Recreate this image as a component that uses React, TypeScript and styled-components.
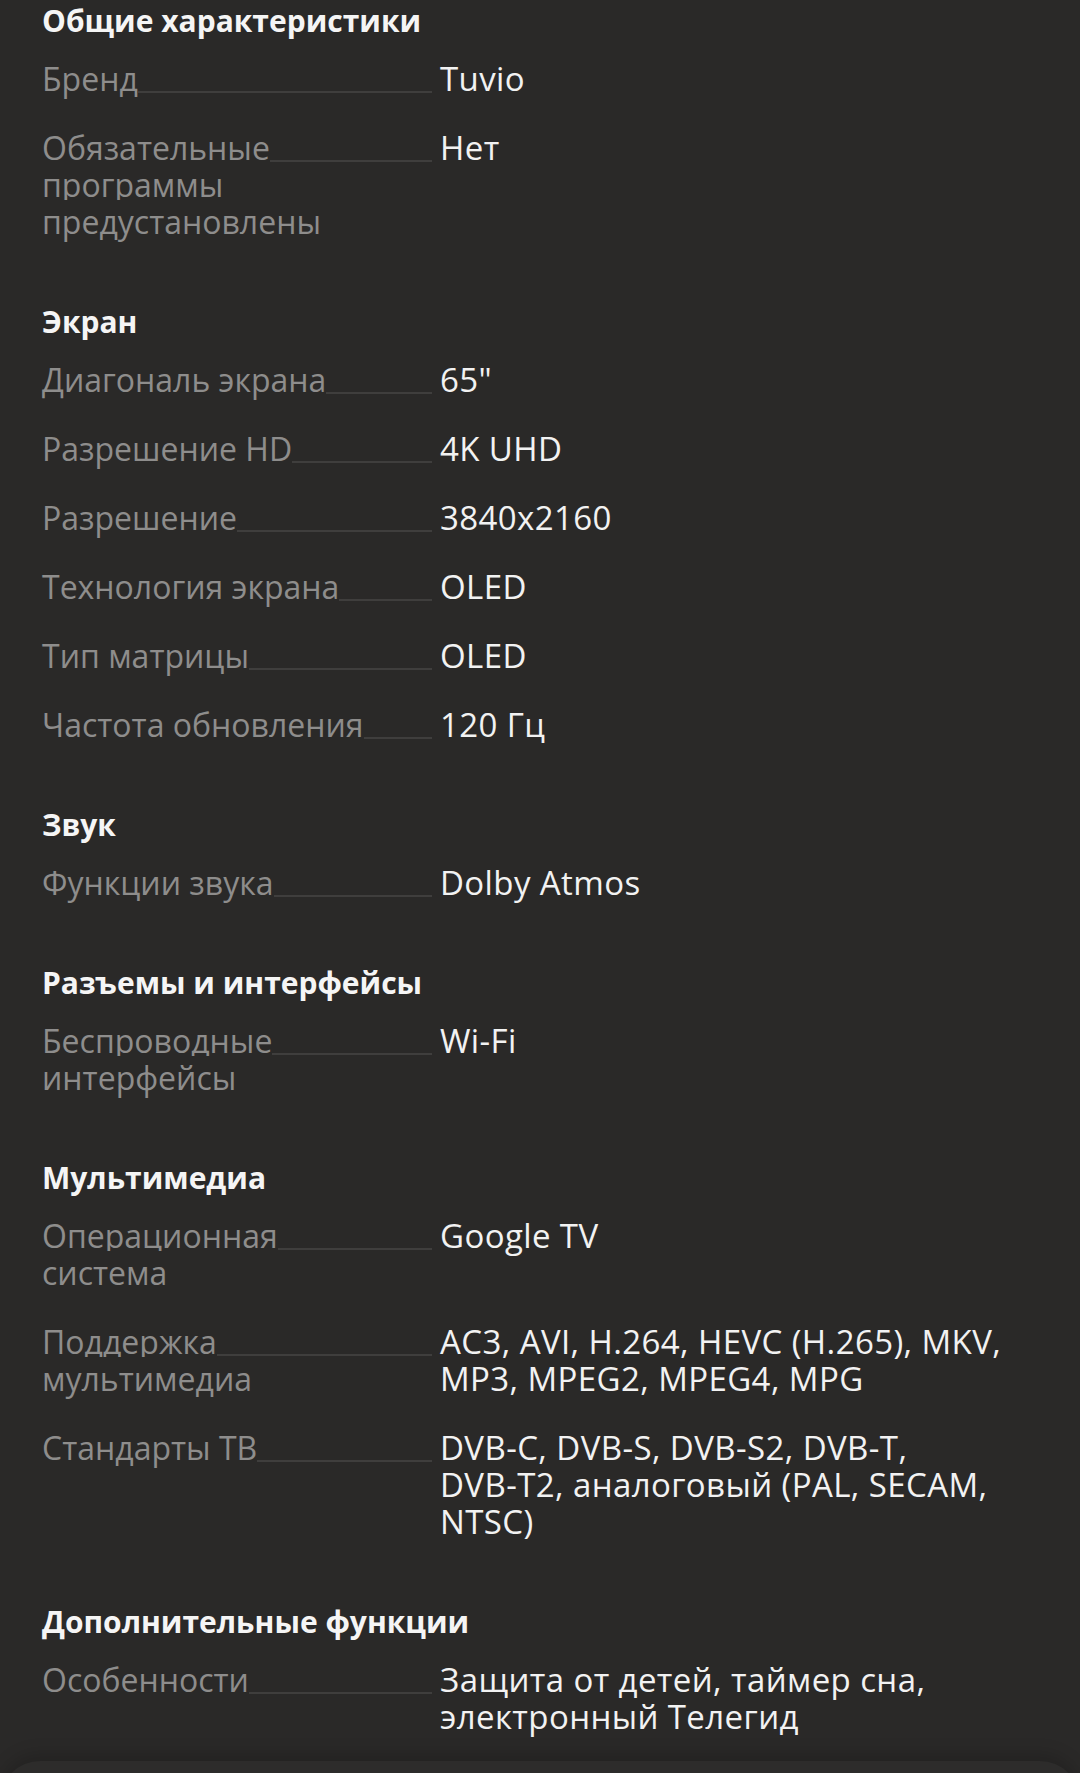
import { Fragment } from 'react';
import styled, { createGlobalStyle } from 'styled-components';

const GlobalStyle = createGlobalStyle`
  html, body {
    margin: 0;
    padding: 0;
    background: #2a2928;
  }
  body {
    font-family: 'Open Sans', 'Noto Sans', sans-serif;
    -webkit-font-smoothing: antialiased;
  }
`;

const Page = styled.div`
  width: 1080px;
  min-height: 1773px;
  box-sizing: border-box;
  padding: 4px 42px 0;
  background: #2a2928;
  overflow: hidden;
`;

const Section = styled.section`
  & + & {
    margin-top: 65px;
  }
`;

const Heading = styled.h2`
  margin: 0 0 22px;
  font-size: 30px;
  line-height: 34px;
  font-weight: 700;
  color: #f5f5f5;
`;

const Rows = styled.dl`
  margin: 0;
  display: flex;
  flex-direction: column;
  gap: 32px;
`;

const Row = styled.div`
  display: grid;
  grid-template-columns: 390px 1fr;
  column-gap: 8px;
  font-size: 32px;
  line-height: 37px;
`;

// the leader line sits under the label; the label text covers it with the page colour
const Term = styled.dt`
  margin: 0;
  padding-right: 30px;
  color: #8e8d8c;
  background: linear-gradient(#3f3e3d, #3f3e3d) no-repeat 0 31px / 100% 2px;
`;

const TermText = styled.span`
  background: #2a2928;
  box-decoration-break: clone;
`;

const Value = styled.dd`
  margin: 0;
  color: #f2f2f2;
  font-size: 33px;
  letter-spacing: 0.4px;
`;

const NoBreak = styled.span`
  display: inline-block;
  white-space: nowrap;
`;

const BottomSheet = styled.div`
  margin: 26px -42px 0;
  height: 40px;
  border-radius: 48px 48px 0 0;
  background: #2d2c2b;
  box-shadow: 0 -6px 18px rgba(0, 0, 0, 0.18);
`;

type Spec = { name: string; value: string };
type Group = { title: string; specs: Spec[] };

const GROUPS: Group[] = [
  {
    title: 'Общие характеристики',
    specs: [
      { name: 'Бренд', value: 'Tuvio' },
      { name: 'Обязательные программы предустановлены', value: 'Нет' },
    ],
  },
  {
    title: 'Экран',
    specs: [
      { name: 'Диагональ экрана', value: '65"' },
      { name: 'Разрешение HD', value: '4K UHD' },
      { name: 'Разрешение', value: '3840x2160' },
      { name: 'Технология экрана', value: 'OLED' },
      { name: 'Тип матрицы', value: 'OLED' },
      { name: 'Частота обновления', value: '120 Гц' },
    ],
  },
  {
    title: 'Звук',
    specs: [{ name: 'Функции звука', value: 'Dolby Atmos' }],
  },
  {
    title: 'Разъемы и интерфейсы',
    specs: [{ name: 'Беспроводные интерфейсы', value: 'Wi-Fi' }],
  },
  {
    title: 'Мультимедиа',
    specs: [
      { name: 'Операционная система', value: 'Google TV' },
      {
        name: 'Поддержка мультимедиа',
        value: 'AC3, AVI, H.264, HEVC (H.265), MKV, MP3, MPEG2, MPEG4, MPG',
      },
      {
        name: 'Стандарты ТВ',
        value: 'DVB-C, DVB-S, DVB-S2, DVB-T, DVB-T2, аналоговый (PAL, SECAM, NTSC)',
      },
    ],
  },
  {
    title: 'Дополнительные функции',
    specs: [
      { name: 'Особенности', value: 'Защита от детей, таймер сна, электронный Телегид' },
    ],
  },
];

// keep hyphenated words (DVB-T2, Wi-Fi) from breaking at the hyphen
const renderValue = (text: string) => {
  if (!text.includes('-')) return text;
  return text.split(' ').map((word, i) => (
    <Fragment key={i}>
      {i > 0 && ' '}
      {word.includes('-') ? <NoBreak>{word}</NoBreak> : word}
    </Fragment>
  ));
};

const App = () => {
  return (
    <>
      <GlobalStyle />
      <Page>
        {GROUPS.map((group) => (
          <Section key={group.title}>
            <Heading>{group.title}</Heading>
            <Rows>
              {group.specs.map((spec) => (
                <Row key={spec.name}>
                  <Term>
                    <TermText>{spec.name}</TermText>
                  </Term>
                  <Value>{renderValue(spec.value)}</Value>
                </Row>
              ))}
            </Rows>
          </Section>
        ))}
        <BottomSheet />
      </Page>
    </>
  );
};

export default App;
